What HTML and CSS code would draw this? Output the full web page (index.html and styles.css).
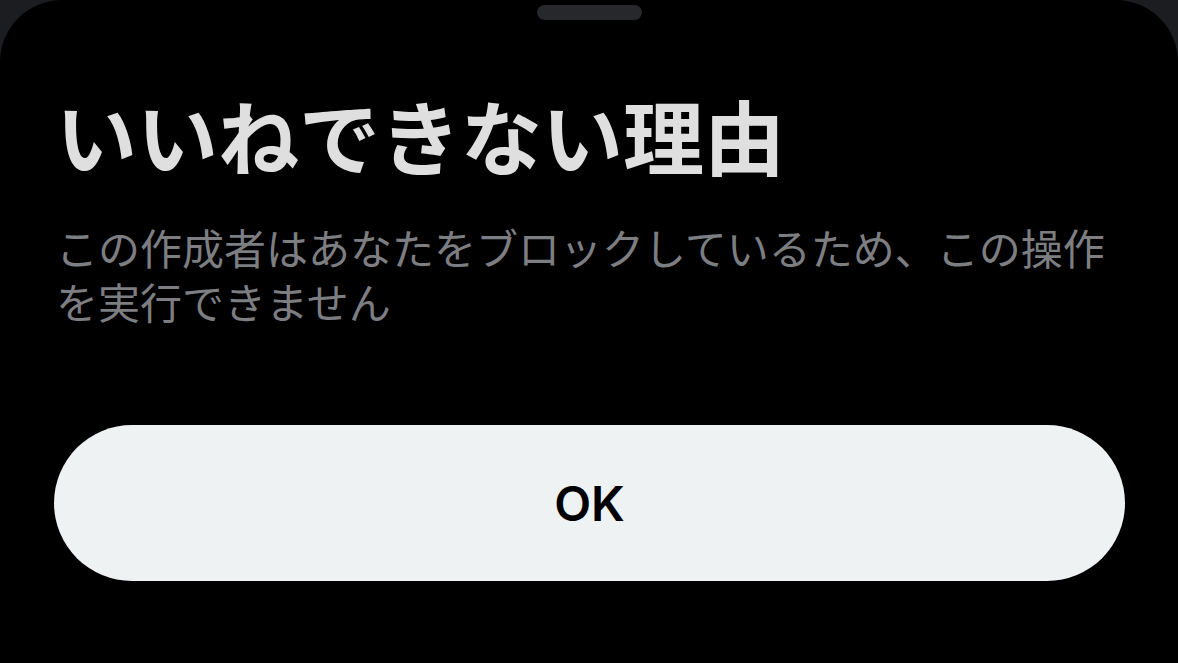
FILE: index.html
```html
<!DOCTYPE html>
<html lang="ja">
<head>
<meta charset="utf-8">
<link rel="stylesheet" href="styles.css">
</head>
<body>
<div class="sheet">
  <div class="handle"></div>
  <h1 class="title">いいねできない理由</h1>
  <p class="desc">この作成者はあなたをブロックしているため、この操作を実行できません</p>
  <button class="ok">OK</button>
</div>
</body>
</html>
```
FILE: styles.css
```css
html, body {
  margin: 0;
  padding: 0;
  background: #1c1d20;
  width: 1178px;
  height: 663px;
  overflow: hidden;
}
.sheet {
  position: relative;
  background: #000;
  height: 663px;
  border-radius: 62px 62px 0 0;
  box-sizing: border-box;
  padding: 0 53px 0 54px;
  display: flex;
  flex-direction: column;
  font-family: "Noto Sans CJK JP", "Noto Sans", sans-serif;
}
.handle {
  align-self: center;
  width: 105px;
  height: 15px;
  border-radius: 8px;
  background: #26282c;
  margin-top: 5px;
}
.title {
  margin: 62px 0 0 2px;
  font-size: 81px;
  line-height: 104px;
  font-weight: 700;
  color: #dfdfdf;
  letter-spacing: 0;
}
.desc {
  margin: 34px 0 0 2px;
  font-size: 42px;
  line-height: 54px;
  color: #7c7e82;
  font-weight: 400;
}
.ok {
  margin-top: 97px;
  width: 1071px;
  height: 156px;
  border: none;
  border-radius: 78px;
  background: #eff2f3;
  color: #000;
  font-family: Inter, "Noto Sans", sans-serif;
  font-weight: 600;
  font-size: 48px;
  padding: 0;
}
```
